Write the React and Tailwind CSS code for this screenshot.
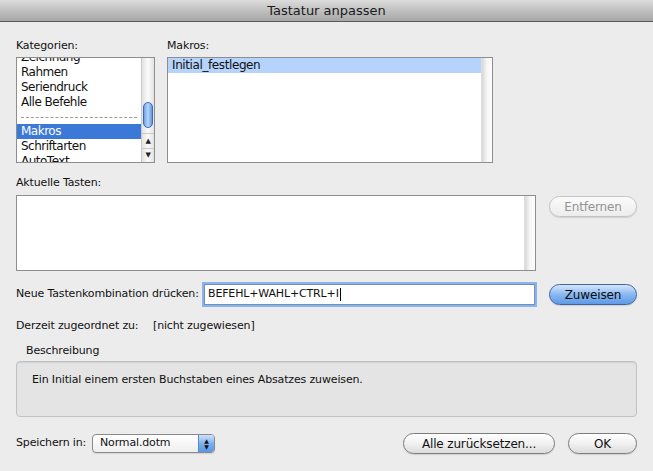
import React from 'react';

const font = "font-['DejaVu_Sans',sans-serif] tracking-[-0.15px]";

// Aqua style push button
const AquaButton = ({ children, width, variant = 'normal' }) => {
  const styles = {
    normal: 'border-[#7d7d7d] bg-gradient-to-b from-[#ffffff] via-[#f1f1f1] to-[#dcdcdc] text-[#111]',
    blue: 'border-[#3f64a3] bg-gradient-to-b from-[#d6e6fb] via-[#8ab8f0] to-[#5d9ae8] text-[#0a0a0a]',
    disabled: 'border-[#c4c4c4] bg-gradient-to-b from-[#fbfbfb] to-[#ececec] text-[#939393]',
  };
  return (
    <button
      className={`h-[21px] rounded-full border text-[12px] leading-none flex items-center justify-center shadow-[0_1px_1px_rgba(0,0,0,0.12)] ${styles[variant]}`}
      style={{ width }}
    >
      {children}
    </button>
  );
};

const CategoryList = () => {
  const items = ['Rahmen', 'Seriendruck', 'Alle Befehle'];
  return (
    <div className="w-[139px] h-[106px] border border-[#8e8e8e] bg-white flex overflow-hidden">
      <div className="flex-1 flex flex-col text-[12px] tracking-[-0.5px] text-[#111] overflow-hidden">
        {/* row scrolled half out of view */}
        <div className="h-[7px] shrink-0 overflow-hidden flex items-end px-[4px]">
          <span className="leading-[15px] whitespace-nowrap">Zeichnung</span>
        </div>
        {items.map((t) => (
          <div key={t} className="h-[15px] shrink-0 px-[4px] leading-[15px]">{t}</div>
        ))}
        <div className="h-[14px] shrink-0 flex items-center px-[4px]">
          <div className="w-full border-t border-dashed border-[#9a9a9a]"></div>
        </div>
        <div className="h-[15px] shrink-0 px-[4px] leading-[15px] bg-[#3b78d7] text-white">Makros</div>
        <div className="h-[15px] shrink-0 px-[4px] leading-[15px]">Schriftarten</div>
        <div className="h-[15px] shrink-0 px-[4px] leading-[15px]">AutoText</div>
      </div>
      {/* scrollbar */}
      <div className="w-[13px] border-l border-[#c9c9c9] bg-gradient-to-r from-[#e3e3e3] via-[#fafafa] to-[#e3e3e3] flex flex-col">
        <div className="flex-1 pt-[2px] px-[1px] flex flex-col">
          <div className="h-[42px]"></div>
          <div className="h-[26px] rounded-full border border-[#3b6cb5] bg-gradient-to-r from-[#6aa3ea] via-[#b9d6f9] to-[#5e98e4]"></div>
        </div>
        <div className="h-[15px] flex items-center justify-center border-t border-[#c9c9c9] text-[7px] text-[#222] leading-none">▲</div>
        <div className="h-[14px] flex items-center justify-center border-t border-[#c9c9c9] text-[7px] text-[#222] leading-none">▼</div>
      </div>
    </div>
  );
};

const EmptyTrack = () => (
  <div className="w-[11px] bg-gradient-to-r from-[#d8d8d8] via-[#f7f7f7] to-[#fcfcfc] border-l border-[#dedede]"></div>
);

export default function App() {
  return (
    <div className={`w-[653px] h-[471px] bg-[#ececec] flex flex-col ${font} text-[#111]`}>
      {/* title bar */}
      <div className="h-[22px] bg-gradient-to-b from-[#dcdcdc] to-[#a6a6a6] border-b border-[#5a5a5a] flex items-center justify-center text-[13px] tracking-normal text-[#1a1a1a]">
        Tastatur anpassen
      </div>

      <div className="flex flex-col px-[16px]">
        {/* lists */}
        <div className="flex gap-[12px] mt-[17px]">
          <div className="flex flex-col">
            <div className="text-[11px] h-[14px] leading-[14px] mb-[4px]">Kategorien:</div>
            <CategoryList />
          </div>
          <div className="flex flex-col">
            <div className="text-[11px] h-[14px] leading-[14px] mb-[4px]">Makros:</div>
            <div className="w-[326px] h-[106px] border border-[#8e8e8e] bg-white flex">
              <div className="flex-1">
                <div className="h-[15px] px-[4px] leading-[15px] text-[12px] tracking-[-0.4px] bg-[#b5d3fb]">Initial_festlegen</div>
              </div>
              <EmptyTrack />
            </div>
          </div>
        </div>

        {/* current keys */}
        <div className="text-[11px] h-[14px] leading-[14px] mt-[13px]">Aktuelle Tasten:</div>
        <div className="flex items-start mt-[5px]">
          <div className="w-[520px] h-[76px] border border-[#8e8e8e] bg-white flex">
            <div className="flex-1"></div>
            <EmptyTrack />
          </div>
          <div className="ml-[13px] mt-[1px]">
            <AquaButton width={88} variant="disabled">Entfernen</AquaButton>
          </div>
        </div>

        {/* new key */}
        <div className="flex items-center mt-[13px]">
          <div className="text-[11px] w-[188px]">Neue Tastenkombination drücken:</div>
          <div className="w-[331px] h-[21px] border border-[#6f8fbf] shadow-[0_0_0_2px_#8cb4ec] bg-white flex items-center px-[3px] text-[11px]">
            BEFEHL+WAHL+CTRL+I
            <span className="inline-block w-[1px] h-[13px] bg-black ml-[1px]"></span>
          </div>
          <div className="ml-[14px]">
            <AquaButton width={88} variant="blue">Zuweisen</AquaButton>
          </div>
        </div>

        {/* currently assigned */}
        <div className="flex items-center mt-[14px] text-[11px] h-[14px]">
          <div className="w-[137px]">Derzeit zugeordnet zu:</div>
          <div>[nicht zugewiesen]</div>
        </div>

        {/* description */}
        <div className="text-[11px] h-[14px] leading-[14px] mt-[11px] ml-[10px]">Beschreibung</div>
        <div className="h-[56px] mt-[3px] rounded-[4px] border border-[#c2c2c2] bg-[#e4e4e4] px-[15px] pt-[10px] text-[11px] shadow-[inset_0_1px_1px_rgba(0,0,0,0.08)]">
          Ein Initial einem ersten Buchstaben eines Absatzes zuweisen.
        </div>

        {/* footer */}
        <div className="flex items-center mt-[16px]">
          <div className="text-[11px] w-[76px]">Speichern in:</div>
          <div className="w-[123px] h-[19px] rounded-[4px] border border-[#8a8a8a] bg-gradient-to-b from-white to-[#eeeeee] flex items-stretch overflow-hidden shadow-[0_1px_1px_rgba(0,0,0,0.1)]">
            <div className="flex-1 flex items-center pl-[7px] text-[11px]">Normal.dotm</div>
            <div className="w-[16px] border-l border-[#5b86c6] bg-gradient-to-b from-[#cfe1f8] via-[#7fb0ee] to-[#5b96e4] flex flex-col items-center justify-center text-[6px] leading-[6px] text-[#111]">
              <span>▲</span>
              <span>▼</span>
            </div>
          </div>
          <div className="flex-1"></div>
          <AquaButton width={152} variant="normal">Alle zurücksetzen...</AquaButton>
          <div className="ml-[13px]">
            <AquaButton width={69} variant="normal">OK</AquaButton>
          </div>
        </div>
      </div>
    </div>
  );
}
